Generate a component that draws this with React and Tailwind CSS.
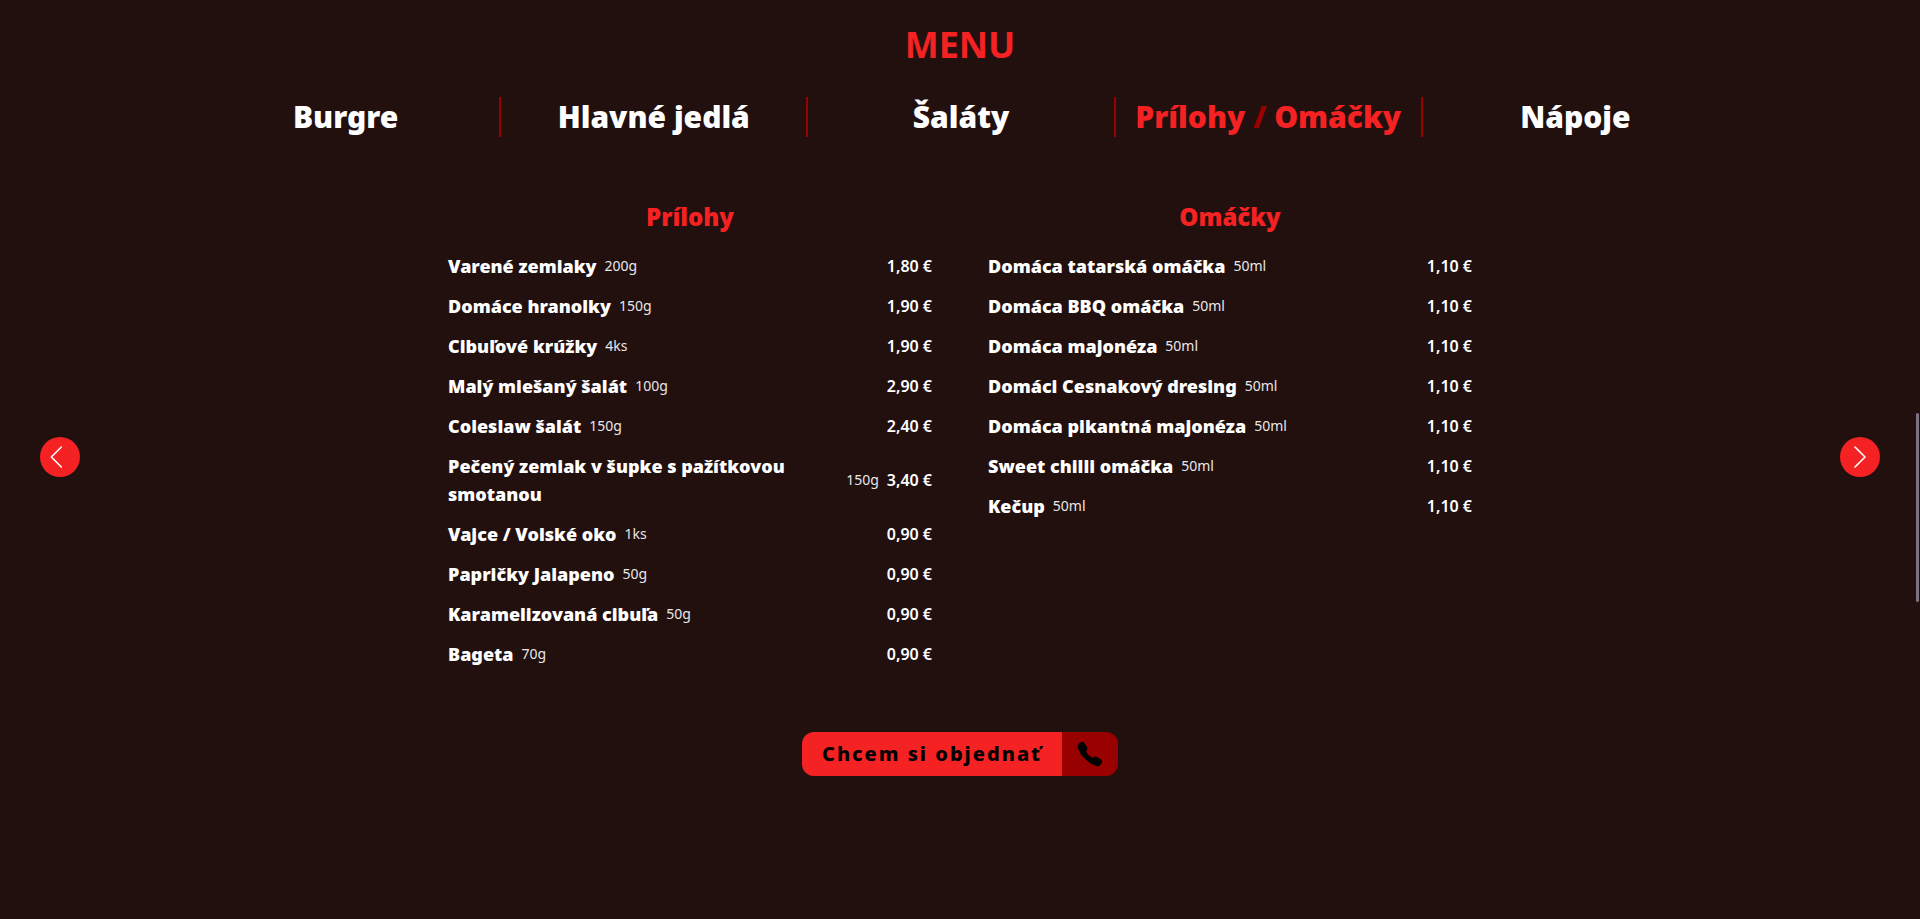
import React from 'react';
import { IoCall } from 'react-icons/io5';

const tabs = [
  { id: 'burgre', parts: ['Burgre'] },
  { id: 'hlavne', parts: ['Hlavné jedlá'] },
  { id: 'salaty', parts: ['Šaláty'] },
  { id: 'prilohy', parts: ['Prílohy', 'Omáčky'] },
  { id: 'napoje', parts: ['Nápoje'] },
];

const sections = [
  {
    title: 'Prílohy',
    items: [
      { name: 'Varené zemiaky', portion: '200g', price: '1,80 €' },
      { name: 'Domáce hranolky', portion: '150g', price: '1,90 €' },
      { name: 'Cibuľové krúžky', portion: '4ks', price: '1,90 €' },
      { name: 'Malý miešaný šalát', portion: '100g', price: '2,90 €' },
      { name: 'Coleslaw šalát', portion: '150g', price: '2,40 €' },
      { name: 'Pečený zemiak v šupke s pažítkovou smotanou', portion: '150g', price: '3,40 €' },
      { name: 'Vajce / Volské oko', portion: '1ks', price: '0,90 €' },
      { name: 'Papričky Jalapeno', portion: '50g', price: '0,90 €' },
      { name: 'Karamelizovaná cibuľa', portion: '50g', price: '0,90 €' },
      { name: 'Bageta', portion: '70g', price: '0,90 €' },
    ],
  },
  {
    title: 'Omáčky',
    items: [
      { name: 'Domáca tatarská omáčka', portion: '50ml', price: '1,10 €' },
      { name: 'Domáca BBQ omáčka', portion: '50ml', price: '1,10 €' },
      { name: 'Domáca majonéza', portion: '50ml', price: '1,10 €' },
      { name: 'Domáci Cesnakový dresing', portion: '50ml', price: '1,10 €' },
      { name: 'Domáca pikantná majonéza', portion: '50ml', price: '1,10 €' },
      { name: 'Sweet chilli omáčka', portion: '50ml', price: '1,10 €' },
      { name: 'Kečup', portion: '50ml', price: '1,10 €' },
    ],
  },
];

function ArrowButton({ label, path, onClick }) {
  return (
    <button
      type="button"
      aria-label={label}
      onClick={onClick}
      className="grid h-10 w-10 shrink-0 cursor-pointer place-items-center rounded-full bg-[#f42222]"
    >
      <svg viewBox="0 0 24 24" fill="none" stroke="currentColor" strokeWidth="1.2" strokeLinecap="round" strokeLinejoin="round" className="h-8 w-8">
        <path d={path} />
      </svg>
    </button>
  );
}

function MenuSection({ title, items }) {
  return (
    <section className="flex-1">
      <h2 className="text-center text-2xl font-black text-[#f42222]">{title}</h2>
      <ul className="mt-[19px] space-y-3">
        {items.map((item) => (
          <li key={item.name} className="flex items-center justify-between gap-2">
            <div className="flex items-center gap-2">
              <h3 className="text-lg font-black">{item.name}</h3>
              <span className="text-sm opacity-90">{item.portion}</span>
            </div>
            <span className="shrink-0 text-base font-semibold">{item.price}</span>
          </li>
        ))}
      </ul>
    </section>
  );
}

export default function App() {
  const [active, setActive] = React.useState(3);

  const move = (step) => setActive((active + step + tabs.length) % tabs.length);

  return (
    <main className="flex min-h-screen items-center bg-[#22100f] px-10 pb-[5px] font-['Noto_Sans',sans-serif] text-white">
      <ArrowButton label="Predchádzajúce" path="M13 19.5 5.5 12l7.5-7.5" onClick={() => move(-1)} />

      <div className="flex flex-1 flex-col items-center self-stretch pt-[25px]">
        <h1 className="text-4xl font-bold text-[#f42222]">MENU</h1>

        {/* Kategórie */}
        <nav className="mt-8 grid w-11/12 max-w-[1536px] grid-cols-5">
          {tabs.map((tab, i) => (
            <button
              key={tab.id}
              type="button"
              onClick={() => setActive(i)}
              className={`h-10 cursor-pointer border-[#990000] text-3xl font-black whitespace-nowrap not-first:border-l-2 ${
                active === i ? 'text-[#f42222]' : 'text-white'
              }`}
            >
              {tab.parts[0]}
              {tab.parts[1] && (
                <>
                  <span className="text-[#990000]"> / </span>
                  {tab.parts[1]}
                </>
              )}
            </button>
          ))}
        </nav>

        {/* Položky */}
        <div className="mt-16 flex w-full max-w-5xl items-start gap-14">
          {sections.map((s) => (
            <MenuSection key={s.title} title={s.title} items={s.items} />
          ))}
        </div>

        <a href="#objednat" className="mt-16 flex overflow-hidden rounded-xl text-black">
          <span className="bg-[#f42222] px-5 py-2 text-xl font-extrabold tracking-widest">Chcem si objednať</span>
          <span className="grid place-items-center bg-[#990000] px-3.5">
            <IoCall className="h-7 w-7" />
          </span>
        </a>
      </div>

      <ArrowButton label="Nasledujúce" path="m8.25 4.5 7.5 7.5-7.5 7.5" onClick={() => move(1)} />

      {/* posuvník stránky */}
      <div className="fixed top-[413px] right-px h-[189px] w-[3px] rounded-full bg-[#7c7280]" />
    </main>
  );
}
